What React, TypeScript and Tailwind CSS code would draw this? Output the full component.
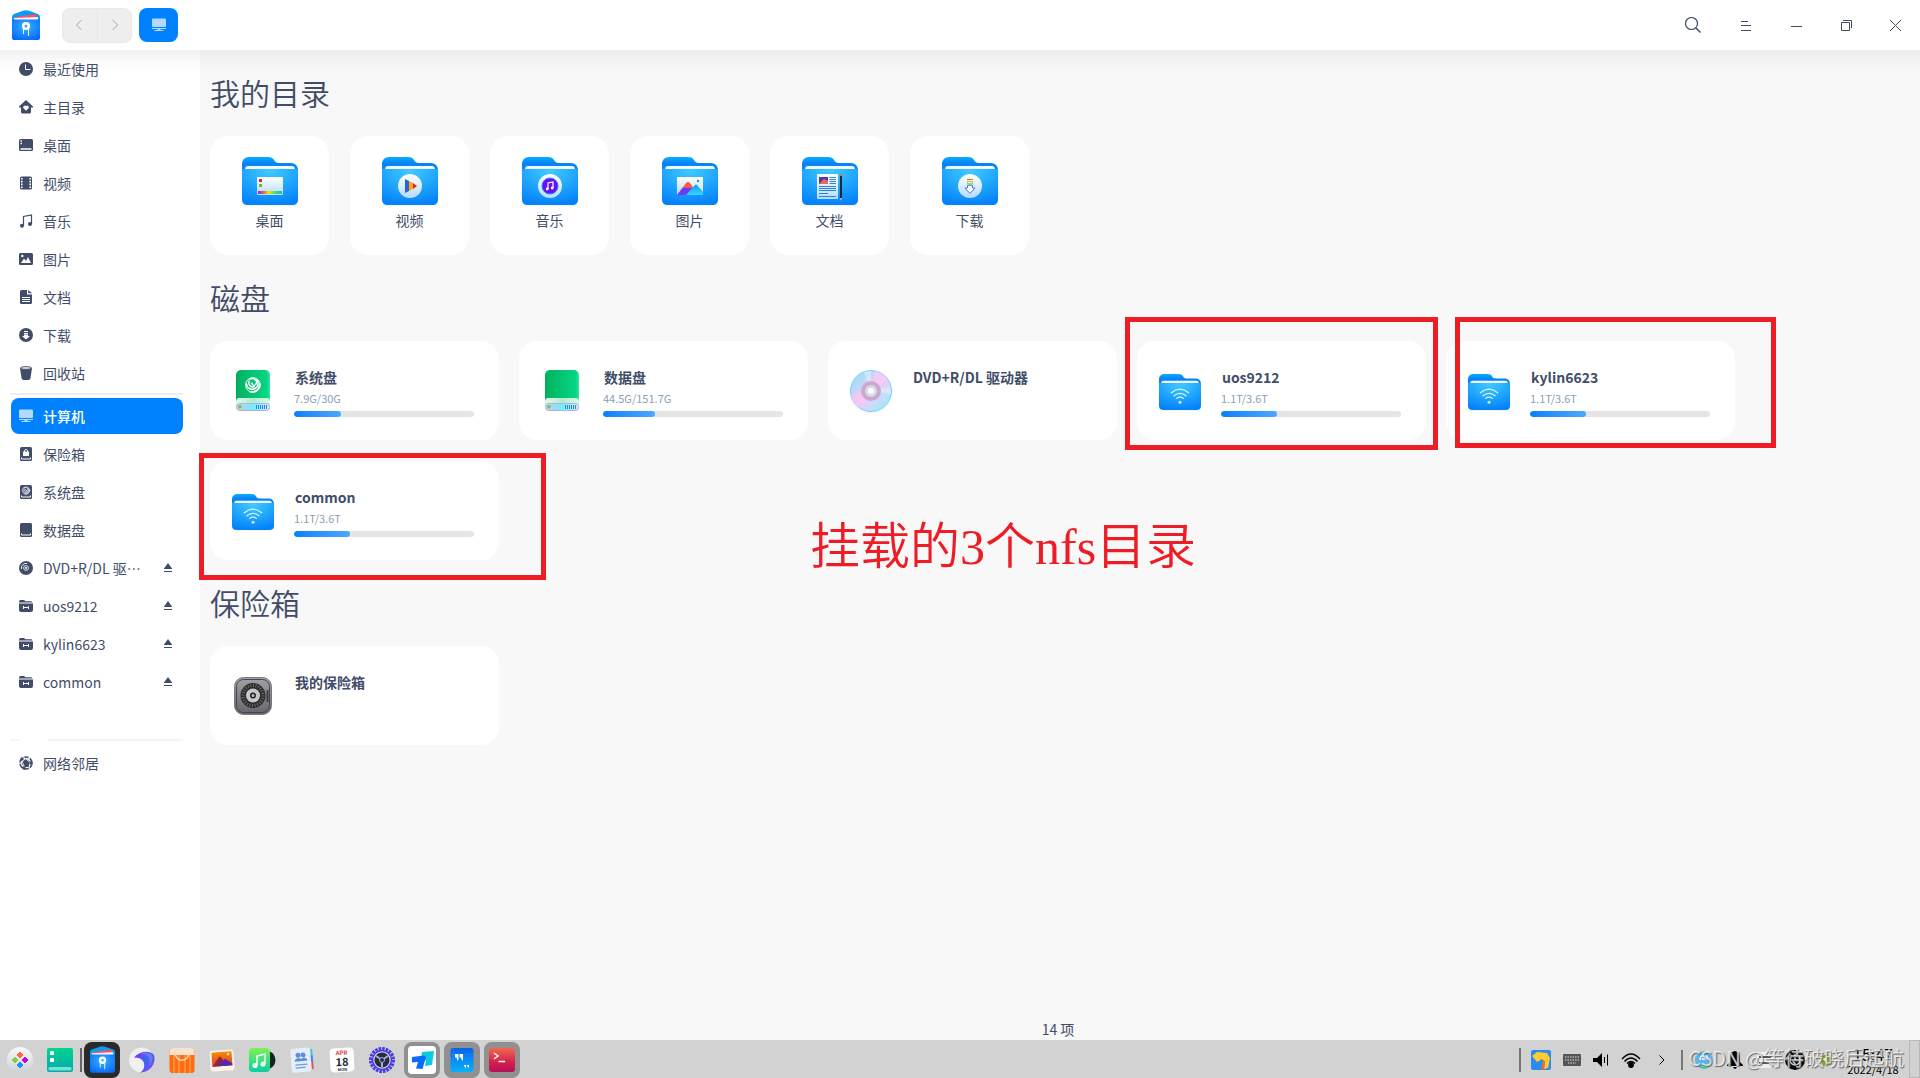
import React from 'react';
import clsx from 'clsx';

type IconProps = { className?: string };

/* Shared gradients for all drawings */
function Gradients() {
  return (
    <svg width="0" height="0" className="absolute" aria-hidden="true">
      <defs>
        <linearGradient id="folderBack" x1="0" y1="0" x2="0" y2="1">
          <stop offset="0" stopColor="#03b0ff" />
          <stop offset="0.3" stopColor="#0a84f5" />
        </linearGradient>
        <radialGradient id="folderFront" cx="0.5" cy="0.05" r="0.95">
          <stop offset="0" stopColor="#3fcbff" />
          <stop offset="0.55" stopColor="#1ea3fb" />
          <stop offset="1" stopColor="#0482fa" />
        </radialGradient>
        <linearGradient id="paper" x1="0" y1="0" x2="0" y2="1">
          <stop offset="0" stopColor="#ffffff" />
          <stop offset="1" stopColor="#b4dcfb" />
        </linearGradient>
        <linearGradient id="rainbow">
          <stop offset="0" stopColor="#9b1bff" />
          <stop offset="0.25" stopColor="#e0763a" />
          <stop offset="0.45" stopColor="#f5e800" />
          <stop offset="0.75" stopColor="#3bd77c" />
          <stop offset="1" stopColor="#1db8f0" />
        </linearGradient>
        <linearGradient id="mountain" x1="0" y1="0" x2="0" y2="1">
          <stop offset="0.4" stopColor="#ff5a45" />
          <stop offset="0.5" stopColor="#6a3cf5" />
        </linearGradient>
        <linearGradient id="mountainBlue" x1="0" y1="0" x2="0" y2="1">
          <stop offset="0" stopColor="#1499f5" />
          <stop offset="1" stopColor="#35d6ff" />
        </linearGradient>
        <linearGradient id="diskGreen">
          <stop offset="0" stopColor="#06a85c" />
          <stop offset="0.1" stopColor="#04b562" />
          <stop offset="0.9" stopColor="#05d583" />
          <stop offset="1" stopColor="#2ee89b" />
        </linearGradient>
        <linearGradient id="diskBand">
          <stop offset="0" stopColor="#e4f8ee" />
          <stop offset="0.5" stopColor="#aeeccf" />
          <stop offset="1" stopColor="#d9f8ea" />
        </linearGradient>
        <linearGradient id="diskBase">
          <stop offset="0" stopColor="#d5c5ee" />
          <stop offset="0.5" stopColor="#6feeff" />
          <stop offset="1" stopColor="#e0e4fa" />
        </linearGradient>
        <linearGradient id="disc" x1="0" y1="0" x2="1" y2="1">
          <stop offset="0" stopColor="#8edcff" />
          <stop offset="0.25" stopColor="#b5d9fb" />
          <stop offset="0.5" stopColor="#f8c8f4" />
          <stop offset="0.7" stopColor="#c6dcfb" />
          <stop offset="1" stopColor="#7ff4f8" />
        </linearGradient>
        <linearGradient id="steel" x1="0" y1="0" x2="0" y2="1">
          <stop offset="0" stopColor="#a2a2a8" />
          <stop offset="1" stopColor="#65656d" />
        </linearGradient>
        <radialGradient id="fmFront" cx="0.5" cy="0.35" r="0.75">
          <stop offset="0" stopColor="#35b5ff" />
          <stop offset="1" stopColor="#0562fb" />
        </radialGradient>
        <linearGradient id="launcher" x1="0" y1="0" x2="0" y2="1">
          <stop offset="0" stopColor="#f8f8f8" />
          <stop offset="1" stopColor="#cbd3d6" />
        </linearGradient>
        <linearGradient id="desk" x1="0" y1="0" x2="0" y2="1">
          <stop offset="0" stopColor="#00d68b" />
          <stop offset="1" stopColor="#07a5b5" />
        </linearGradient>
        <linearGradient id="browser" x1="0" y1="0" x2="1" y2="1">
          <stop offset="0" stopColor="#8f2ef5" />
          <stop offset="0.5" stopColor="#3968ee" />
          <stop offset="1" stopColor="#9a35ff" />
        </linearGradient>
        <linearGradient id="sunset" x1="0" y1="0" x2="0" y2="1">
          <stop offset="0" stopColor="#f78d00" />
          <stop offset="1" stopColor="#e33434" />
        </linearGradient>
        <linearGradient id="tune" x1="0" y1="0" x2="0" y2="1">
          <stop offset="0" stopColor="#7df252" />
          <stop offset="1" stopColor="#08cfa6" />
        </linearGradient>
        <linearGradient id="term" x1="0" y1="0" x2="0" y2="1">
          <stop offset="0" stopColor="#f2684d" />
          <stop offset="0.6" stopColor="#d2214f" />
          <stop offset="1" stopColor="#b50f56" />
        </linearGradient>
        <linearGradient id="quote" x1="0" y1="0" x2="0" y2="1">
          <stop offset="0" stopColor="#0a62ea" />
          <stop offset="1" stopColor="#04b4fb" />
        </linearGradient>
      </defs>
    </svg>
  );
}

function Folder({ className, children }: IconProps & { children?: React.ReactNode }) {
  return (
    <svg viewBox="0 0 56 49" className={clsx('drop-shadow-xs', className)} aria-hidden="true">
      <path d="M0 13V7C0 3 3 0 7 0H26C29 0 31 1 32 3C33 5 34 6 37 6H49C53 6 56 9 56 13V20H0Z" fill="url(#folderBack)" />
      <path d="M3 13C3 10 4 9 6 9H50C52 9 53 10 53 13Z" fill="#eef9ff" />
      <path d="M0 12H56V42C56 46 54 48 50 48H6C2 48 0 46 0 42Z" fill="url(#folderFront)" />
      {children}
    </svg>
  );
}

const emblems: Record<string, React.ReactNode> = {
  desktop: (
    <>
      <rect x="15" y="20" width="26" height="18" rx="1" fill="url(#paper)" />
      <rect x="17" y="22" width="3" height="3" fill="#d8243c" />
      <rect x="17" y="27" width="3" height="3" fill="#76b82a" />
      <rect x="16" y="34" width="24" height="3" fill="url(#rainbow)" />
    </>
  ),
  video: (
    <>
      <circle cx="28" cy="29" r="12" fill="url(#paper)" />
      <path d="M23 22L27 24V34L23 36Z" fill="#2a60e8" />
      <path d="M27 24L31 26V32L27 34Z" fill="#ffae00" />
      <path d="M31 26L35 29L31 32Z" fill="#f0145a" />
    </>
  ),
  music: (
    <>
      <circle cx="28" cy="29" r="12" fill="url(#paper)" />
      <circle cx="28" cy="29" r="8" fill="#6a0ff5" stroke="#1f8cf0" />
      <path d="M26 32V26L31 25V31" fill="none" stroke="#fff" strokeWidth="1.2" />
      <circle cx="25.2" cy="32" r="1.4" fill="#fff" />
      <circle cx="30.2" cy="31" r="1.4" fill="#fff" />
    </>
  ),
  picture: (
    <>
      <rect x="15" y="20" width="26" height="18" fill="url(#paper)" />
      <path d="M15 38L24 26Q26 24 28 26L36 38Z" fill="url(#mountain)" />
      <path d="M24 38L33 28Q34 27 35 28L41 35V38Z" fill="url(#mountainBlue)" />
      <circle cx="36" cy="24" r="1.2" fill="#1590f0" />
    </>
  ),
  document: (
    <>
      <rect x="15" y="17" width="21" height="25" rx="1" fill="url(#paper)" />
      <rect x="17" y="20" width="9" height="7" fill="#5a34a8" />
      <path d="M17 27L22 22L26 24V27Z" fill="#e86a5e" />
      <path d="M27.5 20.5H34M27.5 22.5H34M27.5 24.5H34M27.5 26.5H34M17 29.5H34M17 31.5H34M17 33.5H34M17 36.5H26M17 39.5H34" stroke="#2b84d8" />
      <rect x="38" y="18" width="2" height="24" fill="#26262b" />
      <rect x="38" y="17" width="2" height="2" fill="#d9772c" />
      <path d="M38 41H40L39 43.5Z" fill="#f4c28a" />
    </>
  ),
  download: (
    <>
      <circle cx="28" cy="29" r="12" fill="url(#paper)" />
      <path d="M25 22.5H31" stroke="#f0603a" />
      <rect x="25.5" y="24.5" width="5" height="2" fill="none" stroke="#c5cf2a" />
      <path d="M25.5 28V31H23L28 36.5L33 31H30.5V28Z" fill="#fff" stroke="#4a78f0" />
      <path d="M25.5 28.5H30.5" stroke="#3ec98c" />
    </>
  ),
  wifi: (
    <>
      <path d="M16.5 25Q28 15.500 39.5 25M20 29Q28 22.500 36 29M23.5 32.500Q28 29 32.5 32.500" fill="none" stroke="#e2f5ff" strokeWidth="1.6" strokeLinecap="round" />
      <circle cx="28" cy="37.5" r="2" fill="#c9ecff" />
    </>
  ),
};

function Swirl({ cx, cy, r }: { cx: number; cy: number; r: number }) {
  return (
    <g transform={`translate(${cx} ${cy}) scale(${r / 8})`} fill="none" stroke="currentColor" strokeLinecap="round">
      <circle r="7.4" strokeWidth="1" />
      <path d="M-3 -6C1 -8 5 -4 3 -1C2 1 -1 1 -1 -2" strokeWidth="1.5" />
      <path d="M-6.500 -1C-6 4 -1 5 2 3.500C5 2 6 -2 4 -5" strokeWidth="1.5" />
      <path d="M-4 -4C-5 0 -2 3 1 1.500" strokeWidth="1.5" />
      <path d="M-2 7C3 7 7 4 6.500 -1" strokeWidth="1.8" />
    </g>
  );
}

function DiskDrive({ system }: { system?: boolean }) {
  return (
    <svg viewBox="0 0 34 42" className="w-[34px] h-[42px]" aria-hidden="true">
      <rect width="34" height="40" rx="5" fill="url(#diskGreen)" />
      <path d="M0 32Q0 28 3 28H31Q34 28 34 32V38H0Z" fill="url(#diskBand)" />
      <rect x="0.5" y="33.5" width="33" height="7" rx="3" fill="url(#diskBase)" stroke="#aab4dc" />
      <circle cx="4" cy="36.8" r="1.8" fill="#63d81a" />
      <path d="M20.5 35V39M22.5 35V39M24.5 35V39M26.5 35V39M28.5 35V39M30.5 35V39" stroke="#1c86ea" />
      {system && (
        <g className="text-white">
          <Swirl cx={17} cy={15} r={8} />
        </g>
      )}
    </svg>
  );
}

function OpticalDisc() {
  return (
    <svg viewBox="0 0 42 42" className="w-[42px] h-[42px] drop-shadow-xs" aria-hidden="true">
      <circle cx="21" cy="21" r="20.5" fill="url(#disc)" stroke="#7dd3f5" />
      <path d="M21 21L14 2A20 20 0 0 1 21 1ZM21 21L40 17A20 20 0 0 1 41 24Z" fill="#fff" opacity="0.35" />
      <path d="M21 21L8 37A20 20 0 0 1 1 24Z" fill="#ffc4f0" opacity="0.6" />
      <path d="M21 21L25 1A20 20 0 0 1 37 9Z" fill="#ffc9f5" opacity="0.6" />
      <circle cx="21" cy="21" r="10" fill="#c9a3c9" opacity="0.9" />
      <circle cx="21" cy="21" r="6" fill="#d6dce4" />
      <circle cx="21" cy="21" r="3" fill="#fff" />
    </svg>
  );
}

function Vault() {
  return (
    <svg viewBox="0 0 38 38" className="w-[38px] h-[38px]" aria-hidden="true">
      <rect x="0.5" y="0.5" width="37" height="37" rx="9" fill="url(#steel)" stroke="#77777d" />
      <rect x="2.5" y="2.5" width="33" height="33" rx="7" fill="none" stroke="#45454b" />
      <circle cx="19" cy="18.5" r="12.5" fill="#2b2b2e" />
      <circle cx="19" cy="18.5" r="10" fill="none" stroke="#6d6d68" strokeWidth="3" strokeDasharray="1 1.6" />
      <circle cx="19" cy="18.5" r="7" fill="#c7c7cc" />
      <circle cx="19" cy="18.5" r="2.3" fill="#b5b5bb" stroke="#222226" strokeWidth="1.5" />
      <path d="M33.5 13V25" stroke="#3d3d42" strokeWidth="2" />
    </svg>
  );
}

/* Sidebar glyphs, drawn on a 14x14 grid */
const glyphs: Record<string, React.ReactNode> = {
  recent: (
    <>
      <circle cx="7" cy="7" r="7" />
      <path d="M6.5 2.5V7.5H11.5" fill="none" stroke="#fff" />
    </>
  ),
  home: (
    <>
      <path d="M7 0L14 6.5V7.5H12V12Q12 13.5 10.5 13.5H3.5Q2 13.5 2 12V7.5H0V6.5Z" />
      <path d="M7 10.8L4.3 8A1.6 1.6 0 0 1 7 6.3A1.6 1.6 0 0 1 9.7 8Z" fill="#fff" />
    </>
  ),
  desktop: (
    <>
      <rect y="1" width="14" height="12" rx="1.5" />
      <path d="M1.5 3H3M1.5 5.5H3M1.5 11H12.5" stroke="#fff" strokeWidth="1.5" />
    </>
  ),
  video: (
    <>
      <rect x="1" y="0.5" width="12" height="13" rx="1.5" />
      <path d="M2.8 2V12.5M11.2 2V12.5" stroke="#fff" strokeWidth="1.6" strokeDasharray="1.6 1.2" />
    </>
  ),
  music: (
    <>
      <path d="M4.5 11.5V2.5L12.5 1V10" fill="none" stroke="currentColor" strokeWidth="1.2" />
      <circle cx="3" cy="11.7" r="2" />
      <circle cx="11" cy="10" r="2" />
    </>
  ),
  picture: (
    <>
      <rect y="1" width="14" height="12" rx="1.5" />
      <circle cx="3.3" cy="4" r="1.2" fill="#fff" />
      <path d="M2 11L5 6.5L7 9L9 5L12 11Z" fill="#fff" />
    </>
  ),
  document: (
    <>
      <path d="M2.5 0H8V4.5H13V12.5Q13 14 11.5 14H2.5Q1 14 1 12.5V1.5Q1 0 2.5 0ZM9.2 0L13 3.3H9.2Z" />
      <path d="M3 7.5H11M3 9.5H11M3 11.5H11" stroke="#fff" />
    </>
  ),
  download: (
    <>
      <circle cx="7" cy="7" r="7" />
      <path d="M5 3.5H9M5 5.5H9" stroke="#fff" />
      <path d="M5 6.5H9V8H11L7 11.5L3 8H5Z" fill="#fff" />
    </>
  ),
  trash: (
    <>
      <path d="M1 2H13L11.5 12Q11.2 14 9.5 14H4.5Q2.8 14 2.5 12Z" />
      <ellipse cx="7" cy="2" rx="5.5" ry="1.3" fill="#fff" stroke="currentColor" />
    </>
  ),
  computer: (
    <>
      <rect y="0.5" width="14" height="8.5" rx="1" />
      <path d="M0 10.5H14M2.5 12.5H11.5" stroke="currentColor" />
      <path d="M5.5 10.5H8.5V12.5H5.5Z" />
    </>
  ),
  vault: (
    <>
      <rect x="1" width="12" height="14" rx="1.5" />
      <path d="M4 4.5H10V9H4Z" fill="#fff" />
      <path d="M5.5 5V3.5Q7 1 8.5 3.5V5" fill="none" stroke="#fff" />
      <path d="M2.5 10.5V12H11.5V10.5" fill="none" stroke="#fff" />
    </>
  ),
  system: (
    <>
      <rect x="1" width="12" height="14" rx="1.5" />
      <g className="text-white">
        <Swirl cx={7} cy={5.5} r={4} />
      </g>
      <path d="M2.5 10.5V12H11.5V10.5" fill="none" stroke="#fff" />
    </>
  ),
  disk: (
    <>
      <rect x="1" width="12" height="14" rx="1.5" />
      <path d="M2.5 10.5V12H11.5V10.5" fill="none" stroke="#fff" />
    </>
  ),
  disc: (
    <>
      <circle cx="7" cy="7" r="7" />
      <circle cx="7" cy="7" r="1" fill="#fff" />
      <circle cx="7" cy="7" r="2.4" fill="none" stroke="#fff" strokeWidth="0.8" />
      <path d="M2.5 8A4.6 4.6 0 0 1 8 2.500" fill="none" stroke="#fff" strokeWidth="0.9" />
    </>
  ),
  share: (
    <>
      <path d="M0 3.5V3Q0 1 1.5 1H5L6.5 2.2H12Q13 2.2 13.5 3.5Z" />
      <path d="M0 4.5H14V11Q14 13 12 13H2Q0 13 0 11Z" />
      <path d="M4.5 7V10M9.5 7V10M4.5 8.5H9.5" stroke="#fff" />
    </>
  ),
  network: (
    <>
      <circle cx="7" cy="7" r="6" fill="none" stroke="currentColor" strokeWidth="1.6" strokeDasharray="5 1.3" />
      <path d="M7 2.5L11 5.5L9.5 11H5L2.5 7Z" />
      <path d="M5 1.5Q9 4 12.5 9M2 5Q5 7 5.5 12" fill="none" stroke="#fff" strokeWidth="0.8" />
      <circle cx="3" cy="3" r="1.7" />
      <circle cx="12" cy="7" r="1.7" />
      <circle cx="5" cy="12" r="1.7" />
    </>
  ),
};

function Glyph({ name, className }: { name: string; className?: string }) {
  return (
    <svg viewBox="0 0 14 14" fill="currentColor" className={clsx('size-3.5 shrink-0', className)} aria-hidden="true">
      {glyphs[name]}
    </svg>
  );
}

function FileManagerLogo({ className }: IconProps) {
  return (
    <svg viewBox="0 0 28 31" className={className} aria-hidden="true">
      <path d="M0 7Q0 5 2 4L11 0.8Q14 -0.5 17 0.8L26 4Q28 5 28 7V12H0Z" fill="#0a9df5" />
      <path d="M3 7L24 4L25 9H3Z" fill="#ff4d6a" />
      <path d="M2 8L26 7V10H2Z" fill="#f2f6ff" />
      <path d="M0 9.500H28V28Q28 30 26 30H2Q0 30 0 28Z" fill="url(#fmFront)" />
      <circle cx="14" cy="16" r="2.8" fill="none" stroke="#fff" strokeWidth="2.6" />
      <path d="M11.5 19V24M16.5 19V26" stroke="#fff" />
    </svg>
  );
}

type Place = { icon: string; label: string; eject?: boolean };

const places: Place[] = [
  { icon: 'recent', label: '最近使用' },
  { icon: 'home', label: '主目录' },
  { icon: 'desktop', label: '桌面' },
  { icon: 'video', label: '视频' },
  { icon: 'music', label: '音乐' },
  { icon: 'picture', label: '图片' },
  { icon: 'document', label: '文档' },
  { icon: 'download', label: '下载' },
  { icon: 'trash', label: '回收站' },
];

const devices: Place[] = [
  { icon: 'computer', label: '计算机' },
  { icon: 'vault', label: '保险箱' },
  { icon: 'system', label: '系统盘' },
  { icon: 'disk', label: '数据盘' },
  { icon: 'disc', label: 'DVD+R/DL 驱⋯', eject: true },
  { icon: 'share', label: 'uos9212', eject: true },
  { icon: 'share', label: 'kylin6623', eject: true },
  { icon: 'share', label: 'common', eject: true },
];

function PlaceRow({ place, active }: { place: Place; active?: boolean }) {
  return (
    <li className="flex h-[38px] items-center px-[11px]">
      <div className={clsx('flex h-9 w-[172px] items-center rounded-lg px-2', active && 'bg-[#0081ff] text-white')}>
        <a href="#" className={clsx('flex min-w-0 flex-1 items-center gap-2.5', active && 'font-medium')}>
          <Glyph name={place.icon} className={active ? 'text-[#b3d9ff]' : undefined} />
          <span className="truncate">{place.label}</span>
        </a>
        {place.eject && (
          <button aria-label={`弹出 ${place.label}`} className="mr-[3px] shrink-0">
            <svg viewBox="0 0 8 10" fill="currentColor" className="h-2.5 w-2">
              <path d="M4 0L8 5.5V6H0V5.5ZM0 8H8V9H0Z" />
            </svg>
          </button>
        )}
      </div>
    </li>
  );
}

const directories = [
  { emblem: 'desktop', label: '桌面' },
  { emblem: 'video', label: '视频' },
  { emblem: 'music', label: '音乐' },
  { emblem: 'picture', label: '图片' },
  { emblem: 'document', label: '文档' },
  { emblem: 'download', label: '下载' },
];

type Disk = { name: string; usage?: string; percent?: number; icon: React.ReactNode; frame?: string };

const wifiFolder = <Folder className="mt-1 w-[42px]">{emblems.wifi}</Folder>;

const disks: Disk[] = [
  { name: '系统盘', usage: '7.9G/30G', percent: 26, icon: <DiskDrive system /> },
  { name: '数据盘', usage: '44.5G/151.7G', percent: 29, icon: <DiskDrive /> },
  { name: 'DVD+R/DL 驱动器', icon: <OpticalDisc /> },
  { name: 'uos9212', usage: '1.1T/3.6T', percent: 31, icon: wifiFolder, frame: '-left-3 -right-3 -top-6 -bottom-2.5' },
  { name: 'kylin6623', usage: '1.1T/3.6T', percent: 31, icon: wifiFolder, frame: 'left-[9px] -right-[41px] -top-6 -bottom-2' },
  { name: 'common', usage: '1.1T/3.6T', percent: 31, icon: wifiFolder, frame: '-left-[11px] -right-[47px] -top-2 -bottom-5' },
];

function DiskCard({ disk }: { disk: Disk }) {
  return (
    <article className="relative flex h-[99px] w-[289px] items-start rounded-[18px] bg-white pl-[19px]">
      <div className="flex h-full w-12 items-center justify-center">{disk.icon}</div>
      <div className="ml-[17px] pt-[25px]">
        <h3 className="pl-px text-sm leading-[22px] font-bold">{disk.name}</h3>
        {disk.usage && (
          <>
            <p className="text-[11px] leading-5 text-[#8aa1b4]">{disk.usage}</p>
            <div className="mt-[3px] h-1.5 w-[180px] overflow-hidden rounded-full bg-[#e5e5e5]">
              <div className="h-full rounded-full bg-linear-to-r from-[#0081ff] to-[#4ba6ff]" style={{ width: `${disk.percent}%` }} />
            </div>
          </>
        )}
      </div>
      {disk.frame && <span className={clsx('pointer-events-none absolute z-10 border-[5px] border-[#ee1c25]', disk.frame)} />}
    </article>
  );
}

function SectionTitle({ children }: { children: React.ReactNode }) {
  return <h2 className="mb-[22px] text-[30px] leading-[44px] font-[350]">{children}</h2>;
}

/* Dock drawings on a 26x26 grid */
const dockIcons = {
  launcher: (
    <>
      <circle cx="13" cy="13" r="13" fill="url(#launcher)" />
      <path d="M13 5L16 8L13 11L10 8Z" fill="#ff6a3c" stroke="#ff6a3c" strokeLinejoin="round" />
      <path d="M8 10L11 13L8 16L5 13Z" fill="#86cb52" stroke="#86cb52" strokeLinejoin="round" />
      <path d="M18 10L21 13L18 16L15 13Z" fill="#b60de0" stroke="#b60de0" strokeLinejoin="round" />
      <path d="M13 15L16 18L13 21L10 18Z" fill="#2a8cf5" stroke="#2a8cf5" strokeLinejoin="round" />
    </>
  ),
  desk: (
    <>
      <rect y="1" width="26" height="24" rx="2" fill="url(#desk)" />
      <rect x="3" y="4" width="4" height="4" rx="0.8" fill="#fff" />
      <rect x="3" y="11" width="4" height="4" rx="0.8" fill="#fff" />
      <rect x="1.5" y="20" width="23" height="3.5" rx="1" fill="#73e5cc" />
    </>
  ),
  browser: (
    <>
      <circle cx="12.5" cy="13" r="12.5" fill="#efeff4" />
      <path d="M5 10.500C10 4 21 3 25 8C27.500 17 21 25.500 11 25.500C17 23 18 10 5 10.500Z" fill="url(#browser)" />
      <path d="M11 7C19 6 23 12 19 21C22 17 25 12 23 8C20 5 15 5 11 7Z" fill="#7d80f5" opacity="0.7" />
    </>
  ),
  store: (
    <>
      <rect x="0.5" y="1" width="25" height="25" rx="3" fill="#ff6a12" />
      <path d="M5 8V26M10 8V26M16 8V26M21 8V26" stroke="#ff8f35" strokeWidth="2" />
      <path d="M0.5 8V4Q0.5 1 3.5 1H22.5Q25.5 1 25.5 4V8Z" fill="#f7e3cd" />
      <path d="M6 5C6 16 20 16 20 5" fill="none" stroke="#fbdcc0" strokeWidth="1.5" />
    </>
  ),
  album: (
    <g transform="rotate(-4 13 13)">
      <rect x="1" y="3" width="24" height="21" rx="3" fill="#fdf3e6" />
      <rect x="3" y="5" width="20" height="14" fill="url(#sunset)" />
      <path d="M3 19L11 9L19 19Z" fill="#8d2345" />
      <path d="M9 19L16 12L23 17V19Z" fill="#4d2bb8" />
      <circle cx="19.5" cy="7.5" r="1.3" fill="#ffe3a8" />
    </g>
  ),
  tune: (
    <>
      <circle cx="17" cy="13" r="9.5" fill="#10261f" />
      <rect y="1" width="21" height="24" rx="4" fill="url(#tune)" />
      <path d="M8 18V9L16 7V16" fill="none" stroke="#f0fff4" strokeWidth="1.6" />
      <circle cx="6" cy="18.5" r="2.6" fill="#f0fff4" />
      <circle cx="14" cy="17" r="2.6" fill="#f0fff4" />
    </>
  ),
  contacts: (
    <g transform="rotate(-5 13 13)">
      <path d="M20 3H24V9H20Z" fill="#35c6e8" />
      <path d="M20 9H24V16H20Z" fill="#4a7df0" />
      <path d="M20 16H24V23H20Z" fill="#ef5350" />
      <rect x="2" y="1" width="20" height="24" rx="3" fill="#e5edfa" />
      <circle cx="9.5" cy="8" r="2.5" fill="#5c8fd8" />
      <circle cx="14.5" cy="8" r="2.5" fill="#5c8fd8" />
      <path d="M5.5 14Q6 11 9.5 11Q12 11 12 12Q12.5 11 14.5 11Q18 11 18.5 14Z" fill="#5c8fd8" />
      <path d="M6 17.5H18M6 20.5H16" stroke="#6c9be0" strokeWidth="1.3" />
    </g>
  ),
  settings: (
    <>
      <circle cx="13" cy="13" r="11.5" fill="none" stroke="#4a39e8" strokeWidth="3" strokeDasharray="2.6 1" />
      <circle cx="13" cy="13" r="9.5" fill="#c9cdd8" stroke="#4a39e8" strokeWidth="1.5" />
      <circle cx="13" cy="13" r="7.5" fill="#252b48" />
      <path d="M13 13V20M13 13L7 9M13 13L19 9" stroke="#a9b0c6" strokeWidth="2" />
      <circle cx="13" cy="13" r="2.5" fill="#252b48" stroke="#a9b0c6" />
    </>
  ),
  todesk: (
    <>
      <rect x="-1" y="-1" width="28" height="28" rx="4" fill="#fff" />
      <path d="M13 5L25 4L23 18L16 19L17 13L12 14Z" fill="#0bcbe0" />
      <path d="M3 10L15 8.5L17 10L13.5 22L7 21.5L9 15L3 15.5Z" fill="#0a6cff" />
    </>
  ),
  quote: (
    <>
      <rect x="1.5" y="1" width="23" height="24" rx="3" fill="url(#quote)" />
      <path d="M3 7.5H24M3 11.5H24M3 15.5H24M3 19.5H24M4.5 2V24" stroke="#1f8ff5" strokeWidth="0.6" />
      <path d="M6 7H9.500V12.500L8.500 14L7.500 10.500H6ZM10.500 7H14V12.500L13 14L12 10.500H10.500ZM15 18H17V20L16 21.5V19.5H15ZM18 18H20V20L19 21.5V19.5H18Z" fill="#fff" />
    </>
  ),
  terminal: (
    <>
      <rect y="1" width="26" height="24" rx="3" fill="url(#term)" />
      <path d="M5 6L9 9L5 12M9.5 14.5H16" fill="none" stroke="#fff" strokeWidth="1.5" />
    </>
  ),
};

function DockItem({ label, tile, children }: { label: string; tile?: string; children: React.ReactNode }) {
  return (
    <button aria-label={label} className={clsx('mx-0.5 flex size-9 items-center justify-center rounded-lg', tile)}>
      {children}
    </button>
  );
}

function DockIcon({ name }: { name: keyof typeof dockIcons }) {
  return (
    <svg viewBox="0 0 26 26" className="size-[26px] overflow-visible" aria-hidden="true">
      {dockIcons[name]}
    </svg>
  );
}

function Taskbar() {
  return (
    <footer className="relative flex h-[38px] items-center justify-between bg-[#d2d2d2] pt-0.5 text-black">
      <div className="flex items-center">
        <DockItem label="启动器"><DockIcon name="launcher" /></DockItem>
        <DockItem label="显示桌面"><DockIcon name="desk" /></DockItem>
        <span className="h-6 w-0.5 bg-[#666]" />
        <DockItem label="文件管理器" tile="bg-[#2a2a2a]"><FileManagerLogo className="w-[25px]" /></DockItem>
        <DockItem label="浏览器"><DockIcon name="browser" /></DockItem>
        <DockItem label="应用商店"><DockIcon name="store" /></DockItem>
        <DockItem label="相册"><DockIcon name="album" /></DockItem>
        <DockItem label="音乐"><DockIcon name="tune" /></DockItem>
        <DockItem label="联系人"><DockIcon name="contacts" /></DockItem>
        <DockItem label="日历">
          <span className="flex size-6 -rotate-3 flex-col items-center justify-center rounded bg-white">
            <span className="text-[6px] leading-[7px] font-bold text-[#e0493f]">APR</span>
            <span className="text-[11px] leading-[11px] font-bold text-[#222a3a]">18</span>
            <span className="text-[4px] leading-[5px] font-bold text-[#222a3a]">MON</span>
          </span>
        </DockItem>
        <DockItem label="控制中心"><DockIcon name="settings" /></DockItem>
        <DockItem label="远程桌面" tile="bg-[#909090]"><DockIcon name="todesk" /></DockItem>
        <DockItem label="便签" tile="bg-[#909090]"><DockIcon name="quote" /></DockItem>
        <DockItem label="终端" tile="bg-[#909090]"><DockIcon name="terminal" /></DockItem>
      </div>

      <div className="flex h-full items-center">
        <span className="h-6 w-0.5 bg-[#777]" />
        <button aria-label="截图" className="ml-2.5">
          <svg viewBox="0 0 20 20" className="size-5">
            <rect width="20" height="20" rx="2" fill="#2a8cf0" />
            <path d="M1 6L6 2L16 3L19 8L17 18L13 19L14 12L11 9L6 12Z" fill="#ffcb2e" />
            <path d="M12 10L14 11L13 19L10 20Z" fill="#ef6c2a" />
          </svg>
        </button>
        <button aria-label="键盘" className="ml-3">
          <svg viewBox="0 0 18 12" className="h-3 w-[18px]">
            <rect width="18" height="12" rx="1" fill="#555" />
            <path d="M2 3H16M2 6H16M5 9H13" stroke="#ddd" strokeDasharray="1.5 1" />
          </svg>
        </button>
        <button aria-label="音量" className="ml-3">
          <svg viewBox="0 0 16 14" className="h-3.5 w-4">
            <path d="M0 5H4L9 0V14L4 9H0Z" />
            <path d="M11.5 4V10M14.5 1.5V12.5" stroke="#000" />
          </svg>
        </button>
        <button aria-label="无线网络" className="ml-3">
          <svg viewBox="0 0 20 15" className="h-[15px] w-5" fill="none" stroke="#000" strokeWidth="1.4">
            <path d="M1 6Q10 -4 19 6M3.5 8.5Q10 1.5 16.5 8.5M6 10.5Q10 6.5 14 10.5" />
            <circle cx="10" cy="12" r="2.2" fill="#000" />
          </svg>
        </button>
        <button aria-label="展开" className="ml-[18px]">
          <svg viewBox="0 0 6 10" className="h-2.5 w-1.5" fill="none" stroke="#000">
            <path d="M0.5 0.5L5 5L0.5 9.5" />
          </svg>
        </button>
        <span className="ml-4 h-5 w-0.5 bg-[#777]" />
        <button aria-label="浏览器" className="ml-3">
          <svg viewBox="0 0 18 18" className="size-[18px]">
            <circle cx="9" cy="9" r="9" fill="#5ab4ee" />
            <path d="M2 13Q10 18 17 10Q15 18 8 18Z" fill="#4fd08a" />
            <path d="M5 9A4 4 0 0 1 13 8H7" fill="none" stroke="#fff" strokeWidth="1.5" />
          </svg>
        </button>
        <button aria-label="通知" className="ml-3.5">
          <svg viewBox="0 0 16 18" className="h-[18px] w-4">
            <path d="M8 0Q13 1 13 7V11L16 14V15H0V14L3 11V7Q3 1 8 0ZM6 16H10Q9 18 8 18Q7 18 6 16Z" />
          </svg>
        </button>
        <span className="ml-3.5 flex h-4 w-4 flex-col justify-center gap-1 rounded bg-[#eee] px-0.5">
          <span className="h-0.5 bg-[#555]" />
          <span className="h-0.5 bg-[#555]" />
        </span>
        <button aria-label="电源" className="ml-3">
          <svg viewBox="0 0 20 20" className="size-5">
            <circle cx="10" cy="10" r="10" />
            <path d="M6.5 6.5A5 5 0 1 0 13.5 6.5M10 4V10" fill="none" stroke="#d2d2d2" strokeWidth="1.5" />
          </svg>
        </button>
        <svg viewBox="0 0 14 14" className="ml-3.5 size-3.5">
          <path d="M1 4L8 1L13 5L12 12L4 13Z" fill="#7da32a" />
          <path d="M3 6L8 4L9 10Z" fill="#e6ef9c" />
        </svg>
        <time className="ml-2 flex w-16 flex-col items-center">
          <span className="text-base leading-[18px]">15:47</span>
          <span className="text-[11px] leading-3">2022/4/18</span>
        </time>
        <span className="ml-1 -mt-0.5 h-[38px] w-[11px] border border-[#b8b8b8]" />
      </div>

      <p className="pointer-events-none absolute top-0.5 right-4 text-xl leading-8 whitespace-nowrap text-white/70 [text-shadow:1px_1px_1px_#666]">
        CSDN @等待破晓后起航
      </p>
    </footer>
  );
}

export default function App() {
  return (
    <div className="flex min-h-screen flex-col bg-white font-['Noto_Sans_CJK_SC','Noto_Sans',sans-serif] text-sm text-[#414d68]">
      <Gradients />

      {/* Title bar */}
      <header className="flex h-[50px] items-center justify-between pl-3">
        <div className="flex items-center">
          <FileManagerLogo className="w-7" />
          <div className="ml-[22px] flex h-[35px] w-[70px] rounded-lg border border-[#e9e9e9] bg-[#eeeeee] text-[#a5a9b2]">
            <button aria-label="后退" className="flex flex-1 items-center justify-center border-r border-[#e6e6e6] pr-0.5">
              <svg viewBox="0 0 6 10" className="h-2.5 w-1.5 overflow-visible" fill="none" stroke="currentColor"><path d="M5.5 0L0.5 5L5.5 10" /></svg>
            </button>
            <button aria-label="前进" className="flex flex-1 items-center justify-center pl-0.5">
              <svg viewBox="0 0 6 10" className="h-2.5 w-1.5 overflow-visible" fill="none" stroke="currentColor"><path d="M0.5 0L5.5 5L0.5 10" /></svg>
            </button>
          </div>
          <button aria-label="计算机" className="ml-[7px] flex h-[34px] w-[39px] items-center justify-center rounded-lg bg-[#0081ff] text-[#b3d9ff]">
            <Glyph name="computer" />
          </button>
        </div>
        <div className="flex items-center">
          <button aria-label="搜索" className="flex h-[50px] w-14 items-center justify-center">
            <svg viewBox="0 0 16 16" className="size-4" fill="none" stroke="currentColor" strokeWidth="1.2"><circle cx="6.5" cy="6.5" r="6" /><path d="M11 11L15.5 15.5" strokeWidth="1.5" /></svg>
          </button>
          <button aria-label="菜单" className="flex h-[50px] w-[50px] items-center justify-center">
            <svg viewBox="0 0 10 11" className="h-[11px] w-2.5" stroke="currentColor"><path d="M0 1.5H7M0 5.5H10M0 10.5H10" /></svg>
          </button>
          <button aria-label="最小化" className="flex h-[50px] w-[50px] items-center justify-center">
            <svg viewBox="0 0 11 11" className="size-[11px]" stroke="currentColor"><path d="M0 6.5H11" /></svg>
          </button>
          <button aria-label="还原" className="flex h-[50px] w-[50px] items-center justify-center">
            <svg viewBox="0 0 11 11" className="size-[11px]" fill="none" stroke="currentColor"><path d="M0.5 2.5H8.5V10.5H0.5ZM2 0.5H10.5V8" /></svg>
          </button>
          <button aria-label="关闭" className="flex h-[50px] w-[49px] items-center justify-center">
            <svg viewBox="0 0 11 11" className="size-[11px]" stroke="currentColor"><path d="M0 0L11 11M11 0L0 11" /></svg>
          </button>
        </div>
      </header>

      <div className="relative flex flex-1">
        {/* Shadow cast by the title bar */}
        <div className="pointer-events-none absolute inset-x-0 top-0 h-5 bg-linear-to-b from-black/5 to-transparent" />

        {/* Sidebar */}
        <nav className="w-[200px] shrink-0">
          <ul>
            {places.map((place) => (
              <PlaceRow key={place.label} place={place} />
            ))}
          </ul>
          <hr className="mx-2.5 mt-px mb-0.5 w-[173px] border-t-2 border-[#eeeeee]" />
          <ul>
            {devices.map((place) => (
              <PlaceRow key={place.label} place={place} active={place.icon === 'computer'} />
            ))}
          </ul>
          <div className="mx-2.5 mt-[38px] mb-[3px] flex w-[173px] gap-7">
            <hr className="w-2.5 border-t-2 border-[#f5f5f5]" />
            <hr className="flex-1 border-t-2 border-[#f5f5f5]" />
          </div>
          <ul>
            <PlaceRow place={{ icon: 'network', label: '网络邻居' }} />
          </ul>
        </nav>

        {/* Content */}
        <main className="flex flex-1 flex-col gap-5 bg-[#f8f8f8] pt-5 pl-2.5">
          <section>
            <SectionTitle>我的目录</SectionTitle>
            <div className="flex flex-wrap gap-[21px]">
              {directories.map((dir) => (
                <a key={dir.label} href="#" className="flex size-[119px] flex-col items-center rounded-[18px] bg-white pt-[21px]">
                  <Folder className="w-14">{emblems[dir.emblem]}</Folder>
                  <span className="mt-[3px] leading-[22px]">{dir.label}</span>
                </a>
              ))}
            </div>
          </section>

          <section className="relative">
            <SectionTitle>磁盘</SectionTitle>
            <div className="flex flex-wrap gap-x-5 gap-y-[21px]">
              {disks.map((disk) => (
                <DiskCard key={disk.name} disk={disk} />
              ))}
            </div>
            <p className="absolute -bottom-3 left-[600px] font-['Liberation_Serif','Noto_Sans_CJK_SC',serif] text-[50px] leading-none font-[350] whitespace-nowrap text-[#ee1c25]">
              挂载的3个nfs目录
            </p>
          </section>

          <section>
            <SectionTitle>保险箱</SectionTitle>
            <DiskCard disk={{ name: '我的保险箱', icon: <Vault /> }} />
          </section>

          <p className="mt-auto pr-3.5 text-center leading-[22px]">14 项</p>
        </main>
      </div>

      <Taskbar />
    </div>
  );
}
